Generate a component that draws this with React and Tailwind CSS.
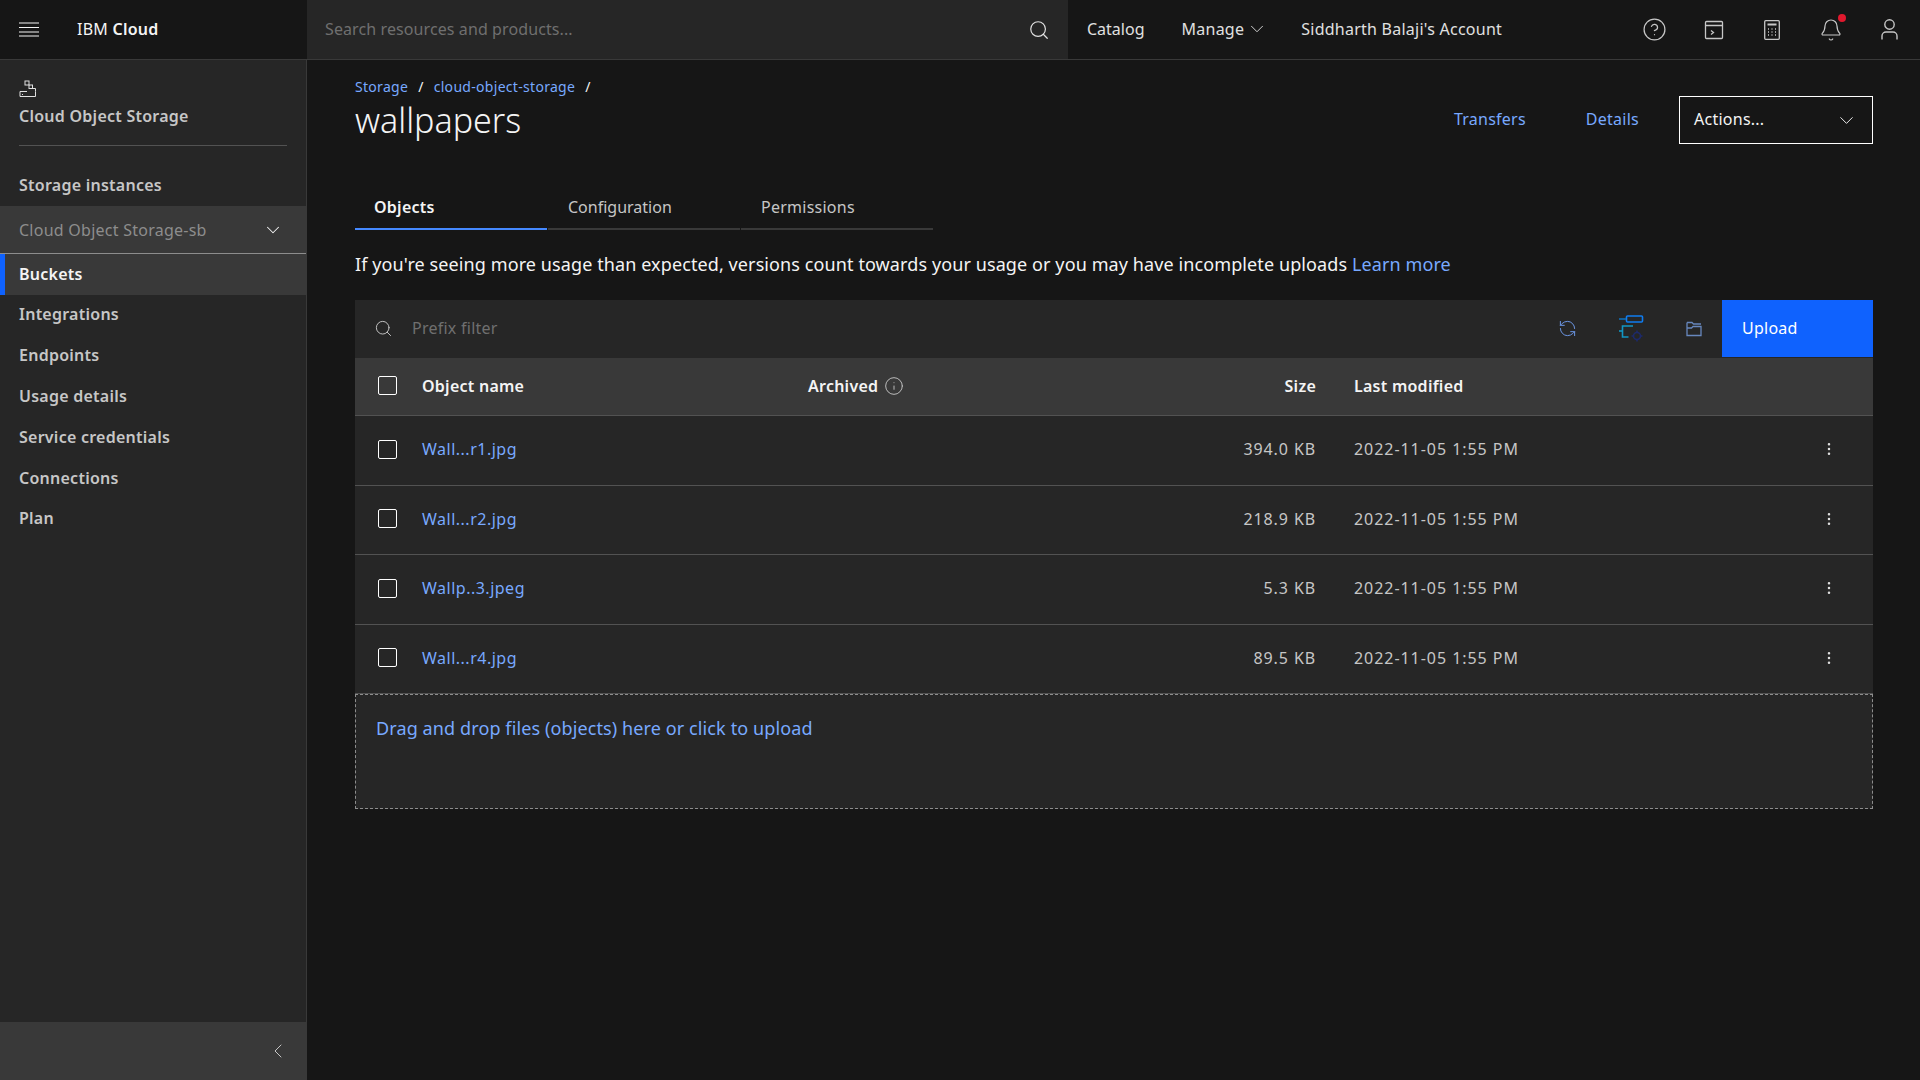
import React from 'react';
import { Search, ChevronDown, ChevronLeft, RefreshCcw, MoreVertical, Info, HelpCircle, Bell } from 'lucide-react';

const navItems = ['Integrations', 'Endpoints', 'Usage details', 'Service credentials', 'Connections', 'Plan'];

const objects = [
  { name: 'Wall...r1.jpg', size: '394.0 KB' },
  { name: 'Wall...r2.jpg', size: '218.9 KB' },
  { name: 'Wallp..3.jpeg', size: '5.3 KB' },
  { name: 'Wall...r4.jpg', size: '89.5 KB' },
];

const Checkbox = () => <div className="w-[19px] h-[19px] border border-white rounded-[2px] shrink-0" />;

const HamburgerIcon = () => (
  <svg width="20" height="15" viewBox="0 0 20 15" stroke="#f4f4f4" strokeWidth="1.2">
    <path d="M0 1h20M0 5.500h20M0 10h20M0 14h20" />
  </svg>
);

const StorageIcon = () => (
  <svg width="18" height="18" viewBox="0 0 18 18" fill="none" stroke="#e0e0e0" strokeWidth="1">
    <rect x="6" y="1" width="4" height="4" />
    <rect x="10" y="5" width="3.5" height="3.5" />
    <path d="M13.5 8.5h3v3M1 11.5h7M1 11.5v5h15.5v-5" />
    <path d="M3 14.5h1" />
  </svg>
);

const ShellIcon = () => (
  <svg width="20" height="20" viewBox="0 0 20 20" fill="none" stroke="#c6c6c6" strokeWidth="1.3">
    <rect x="1.5" y="1.5" width="17" height="17" rx="1" />
    <path d="M1.5 5.5h17M7 10.5l2.5 2-2.5 2" />
  </svg>
);

const CalculatorIcon = () => (
  <svg width="16" height="20" viewBox="0 0 16 20" fill="none" stroke="#c6c6c6" strokeWidth="1.3">
    <rect x="0.700" y="0.700" width="14.600" height="18.600" rx="1" />
    <path d="M3.500 4.500h9" strokeWidth="2" />
    <path d="M4 9h1M7.500 9h1M11 9h1M4 12h1M7.500 12h1M11 12h1M4 15h1M7.500 15h1M11 15h1" />
  </svg>
);

const UserIcon = () => (
  <svg width="17" height="21" viewBox="0 0 17 21" fill="none" stroke="#c6c6c6" strokeWidth="1.400">
    <circle cx="8.500" cy="5.500" r="4.700" />
    <path d="M1 20.500v-3.500a4 4 0 0 1 4-4h7a4 4 0 0 1 4 4v3.500" />
  </svg>
);

const FolderIcon = () => (
  <svg width="16" height="16" viewBox="0 0 16 16" fill="none" stroke="#6787bd" strokeWidth="1.300">
    <path d="M1 1.500h5l1.500 1.500h7.500" />
    <path d="M1 1.500v13h14V5.500H7L5.500 7H1" />
  </svg>
);

const PipelineIcon = () => (
  <svg width="26" height="28" viewBox="0 0 26 28" fill="none" strokeWidth="1.6">
    <rect x="8.5" y="1" width="16" height="6" rx="1" stroke="#0f7cf0" />
    <path d="M1 4h7" stroke="#0e6fb8" />
    <path d="M15 11H4.500v11h6" stroke="#1296c4" />
    <path d="M1 16h3" stroke="#1296c4" />
    <circle cx="19" cy="21" r="3.500" stroke="#1d2a6b" />
    <path d="M19 15.500v2M19 24.500v2M13.500 21h2M22.500 21h2" stroke="#1d2a6b" />
  </svg>
);

const App = () => {
  return (
    <div className="w-full h-screen overflow-hidden flex flex-col bg-[#161616] text-[#f4f4f4] tracking-[0.25px] font-['Noto_Sans',sans-serif]">
      {/* top bar */}
      <header className="h-[60px] shrink-0 flex border-b border-[#393939] bg-[#161616]">
        <div className="w-[307px] shrink-0 flex items-center pl-[19px]">
          <HamburgerIcon />
          <span className="ml-[38px] pb-[2px] text-[16px] text-[#f4f4f4]">IBM <b className="font-semibold">Cloud</b></span>
        </div>
        <div className="w-[761px] shrink-0 bg-[#262626] flex items-center justify-between pl-[18px] pr-[18px]">
          <span className="pb-[2px] text-[16px] tracking-[0.1px] text-[#6f6f6f]">Search resources and products...</span>
          <Search size={22} strokeWidth={1.3} className="text-[#e0e0e0]" />
        </div>
        <nav className="flex items-center pb-[2px] text-[16px] text-[#e0e0e0]">
          <span className="ml-[19px] tracking-normal">Catalog</span>
          <span className="ml-[37px] flex items-center gap-[2px]">Manage <ChevronDown size={22} strokeWidth={1} /></span>
          <span className="ml-[33px]">Siddharth Balaji's Account</span>
        </nav>
        <div className="ml-auto flex items-center pr-[22px] text-[#c6c6c6]">
          <HelpCircle size={25} strokeWidth={1.2} />
          <div className="ml-[37px]"><ShellIcon /></div>
          <div className="ml-[40px]"><CalculatorIcon /></div>
          <div className="relative ml-[39px]">
            <Bell size={24} strokeWidth={1.2} />
            <span className="absolute -top-[4px] right-[-3px] w-[8px] h-[8px] rounded-full bg-[#e0182d]" />
          </div>
          <div className="ml-[38px]"><UserIcon /></div>
        </div>
      </header>

      <div className="flex flex-1 min-h-0">
        {/* side nav */}
        <aside className="w-[307px] shrink-0 bg-[#262626] border-r border-[#393939] flex flex-col">
          <div className="px-[19px] pt-[20px] h-[85px]">
            <StorageIcon />
            <div className="mt-[6px] text-[16px] font-semibold text-[#c6c6c6]">Cloud Object Storage</div>
          </div>
          <div className="mx-[19px] border-b border-[#525252]" />
          <div className="h-[60px] pl-[19px] flex items-center pt-[18px] text-[16px] font-semibold text-[#c6c6c6]">Storage instances</div>
          <div className="h-[48px] bg-[#393939] border-b border-[#8d8d8d] pl-[19px] pr-[22px] flex items-center justify-between text-[16px] text-[#8d8d8d]">
            Cloud Object Storage-sb
            <ChevronDown size={22} strokeWidth={1.1} className="text-[#f4f4f4]" />
          </div>
          <div className="h-[41px] bg-[#393939] border-l-[5px] border-[#0f62fe] pl-[14px] pb-[2px] flex items-center text-[16px] font-semibold text-[#f4f4f4]">Buckets</div>
          {navItems.map((item) => (
            <div key={item} className="h-[40.800px] pl-[19px] pb-[2px] flex items-center text-[16px] font-semibold text-[#c6c6c6]">{item}</div>
          ))}
          <div className="mt-auto h-[58px] bg-[#393939] flex items-center justify-end pr-[16px]">
            <ChevronLeft size={24} strokeWidth={1} className="text-[#c6c6c6]" />
          </div>
        </aside>

        {/* content */}
        <main className="flex-1 min-w-0 pl-[48px] pr-[47px]">
          <div className="flex items-start justify-between h-[84px]">
            <div>
              <div className="pt-[18px] flex items-center text-[14px] leading-[18px] tracking-[0.3px] text-[#78a9ff]">
                Storage
                <span className="mx-[10px] text-[#f4f4f4]">/</span>
                cloud-object-storage
                <span className="mx-[10px] text-[#f4f4f4]">/</span>
              </div>
              <h1 className="mt-[4px] text-[34px] leading-[40px] font-light tracking-normal text-[#f4f4f4]">wallpapers</h1>
            </div>
            <div className="flex items-center mt-[36px] text-[16px] text-[#78a9ff]">
              <span className="pb-[2px]">Transfers</span>
              <span className="ml-[60px] pb-[2px]">Details</span>
              <div className="ml-[40px] w-[194px] h-[48px] border border-white flex items-center justify-between pl-[14px] pr-[14px] text-[#f4f4f4]">
                <span className="pb-[2px]">Actions...</span>
                <ChevronDown size={23} strokeWidth={1} />
              </div>
            </div>
          </div>

          <div className="flex gap-[1px] mt-[42px] h-[60px] items-start">
            <div className="w-[192px] h-[44px] border-b-2 border-[#4589ff] pl-[19px] flex items-center text-[16px] font-semibold text-[#f4f4f4]">Objects</div>
            <div className="w-[192px] h-[44px] border-b-2 border-[#393939] pl-[20px] flex items-center text-[16px] tracking-normal text-[#c6c6c6]">Configuration</div>
            <div className="w-[192px] h-[44px] border-b-2 border-[#393939] pl-[20px] flex items-center text-[16px] text-[#c6c6c6]">Permissions</div>
          </div>

          <p className="text-[18px] leading-[24px] tracking-[0.1px] text-[#f4f4f4] mt-[6px]">
            If you're seeing more usage than expected, versions count towards your usage or you may have incomplete uploads <span className="text-[#78a9ff]">Learn more</span>
          </p>

          <div className="mt-[24px] bg-[#262626]">
            {/* toolbar */}
            <div className="h-[58px] flex items-start pl-[19px]">
              <Search size={19} strokeWidth={1.2} className="mt-[19px] text-[#c6c6c6]" />
              <span className="ml-[19px] mt-[16px] text-[16px] text-[#6f6f6f]">Prefix filter</span>
              <div className="ml-auto flex items-center">
                <RefreshCcw size={19} strokeWidth={1.2} className="text-[#6f9bec]" />
                <div className="ml-[41px]"><PipelineIcon /></div>
                <div className="ml-[42px]"><FolderIcon /></div>
                <div className="ml-[20px] w-[151px] h-[57px] bg-[#0f62fe] pl-[20px] pb-[2px] flex items-center text-[16px] text-white">Upload</div>
              </div>
            </div>

            {/* table */}
            <div className="h-[58px] bg-[#393939] border-b border-[#525252] grid grid-cols-[44px_386px_508px_38px_1fr] items-center pl-[23px] pb-[2px] text-[16px] font-semibold text-[#f4f4f4]">
              <Checkbox />
              <span>Object name</span>
              <span className="flex items-center justify-between">
                <span className="flex items-center gap-[6px]">Archived <Info size={20} strokeWidth={1.1} className="text-[#c6c6c6]" /></span>
                <span>Size</span>
              </span>
              <span />
              <span>Last modified</span>
            </div>
            {objects.map((o) => (
              <div key={o.name} className="h-[69.500px] border-b border-[#525252] grid grid-cols-[44px_386px_508px_38px_1fr_52px] items-center pl-[23px] pb-[2px] text-[16px] text-[#c6c6c6]">
                <Checkbox />
                <span className="tracking-[0.5px] text-[#78a9ff]">{o.name}</span>
                <span className="tracking-[0.9px] text-right">{o.size}</span>
                <span />
                <span className="tracking-[0.95px]">2022-11-05 1:55 PM</span>
                <MoreVertical size={16} strokeWidth={1.8} className="text-[#e0e0e0]" />
              </div>
            ))}
            <div className="h-[115px] border border-dashed border-[#8d8d8d] pl-[20px] pt-[21px] text-[18px] leading-[24px] tracking-[0.11px] text-[#78a9ff]">
              Drag and drop files (objects) here or click to upload
            </div>
          </div>
        </main>
      </div>
    </div>
  );
};

export default App;
